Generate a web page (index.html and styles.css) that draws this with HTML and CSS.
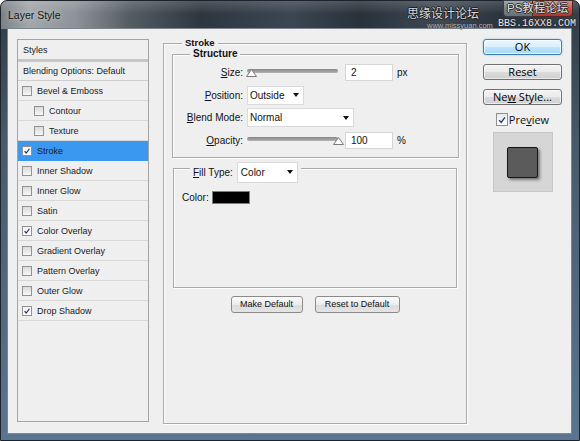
FILE: index.html
```html
<!DOCTYPE html>
<html>
<head>
<meta charset="utf-8">
<title>Layer Style</title>
<link rel="stylesheet" href="styles.css">
</head>
<body>
<div class="window">
  <div class="titlebar">
    <span class="title">Layer Style</span>
    <span class="cap-max"></span>
    <span class="cap-close"></span>
    <span class="wm-site">思缘设计论坛</span>
    <span class="wm-url">www.missyuan.com</span>
    <span class="wm-ps">PS教程论坛</span>
    <span class="wm-bbs">BBS.16XX8.COM</span>
  </div>
  <div class="client">
    <div class="styles-panel">
      <div class="sp-head">Styles</div>
      <div class="sp-blend">Blending Options: Default</div>
      <div class="sp-row"><span class="cb"></span>Bevel &amp; Emboss</div>
      <div class="sp-row sub"><span class="cb"></span>Contour</div>
      <div class="sp-row sub"><span class="cb"></span>Texture</div>
      <div class="sp-row active"><span class="cb on"><svg viewBox="0 0 10 10"><path d="M2 5.2 L4 7.6 L8 2.2" fill="none" stroke="#1f2f66" stroke-width="1.5"/></svg></span>Stroke</div>
      <div class="sp-row"><span class="cb"></span>Inner Shadow</div>
      <div class="sp-row"><span class="cb"></span>Inner Glow</div>
      <div class="sp-row"><span class="cb"></span>Satin</div>
      <div class="sp-row"><span class="cb on"><svg viewBox="0 0 10 10"><path d="M2 5.2 L4 7.6 L8 2.2" fill="none" stroke="#1f2f66" stroke-width="1.5"/></svg></span>Color Overlay</div>
      <div class="sp-row"><span class="cb"></span>Gradient Overlay</div>
      <div class="sp-row"><span class="cb"></span>Pattern Overlay</div>
      <div class="sp-row"><span class="cb"></span>Outer Glow</div>
      <div class="sp-row"><span class="cb on"><svg viewBox="0 0 10 10"><path d="M2 5.2 L4 7.6 L8 2.2" fill="none" stroke="#1f2f66" stroke-width="1.5"/></svg></span>Drop Shadow</div>
    </div>

    <div class="group stroke-group">
      <div class="group-title">Stroke</div>
      <div class="group structure">
        <div class="group-title small">Structure</div>
        <div class="form">
          <div class="row">
            <span class="lbl"><u>S</u>ize:</span>
            <div class="slider"><div class="track"></div><svg class="thumb" viewBox="0 0 11 8"><path d="M5.5 0.5 L10.5 7.5 L0.5 7.5 Z" fill="#fdfdfd" stroke="#7a7a7a"/></svg></div>
            <span class="num">2</span>
            <span class="unit">px</span>
          </div>
          <div class="row">
            <span class="lbl"><u>P</u>osition:</span>
            <div class="select pos">Outside</div>
          </div>
          <div class="row">
            <span class="lbl"><u>B</u>lend Mode:</span>
            <div class="select blend">Normal</div>
          </div>
          <div class="row">
            <span class="lbl"><u>O</u>pacity:</span>
            <div class="slider"><div class="track"></div><svg class="thumb end" viewBox="0 0 11 8"><path d="M5.5 0.5 L10.5 7.5 L0.5 7.5 Z" fill="#fdfdfd" stroke="#7a7a7a"/></svg></div>
            <span class="num">100</span>
            <span class="unit">%</span>
          </div>
        </div>
      </div>

      <div class="group fill">
        <div class="fill-head">
          <span><u>F</u>ill Type:</span>
          <div class="select filltype">Color</div>
        </div>
        <div class="color-row">
          <span>Color:</span>
          <span class="swatch"></span>
        </div>
      </div>

      <div class="btn-row">
        <button class="pbtn make">Make Default</button>
        <button class="pbtn reset">Reset to Default</button>
      </div>
    </div>

    <div class="side">
      <button class="abtn ok">OK</button>
      <button class="abtn">Reset</button>
      <button class="abtn">Ne<u>w</u> Style...</button>
      <div class="preview-check">
        <span class="pcb"><svg viewBox="0 0 12 12"><path d="M2.5 6.2 L5 9 L9.5 2.8" fill="none" stroke="#23357a" stroke-width="1.6"/></svg></span>
        <span>Pre<u>v</u>iew</span>
      </div>
      <div class="preview-box"><div class="pv-square"></div></div>
    </div>
  </div>
</div>
</body>
</html>
```

FILE: styles.css
```css
* { box-sizing: border-box; }
html, body { margin: 0; padding: 0; }
body {
  width: 580px;
  height: 441px;
  overflow: hidden;
  background: #ffffff;
  font-family: "Liberation Sans", Arial, sans-serif;
  color: #111;
}

.window {
  width: 580px;
  height: 441px;
  border: 1px solid #1c232a;
  border-radius: 7px 7px 0 0;
  padding: 0 7px 6px 6px;
  display: flex;
  flex-direction: column;
  background:
    linear-gradient(to bottom, rgba(255,255,255,0.16), rgba(255,255,255,0) 13px) top / 100% 28px no-repeat,
    linear-gradient(to right, #7b8186 0, #a3a7ab 28px, #8d9297 75px, #535b63 130px, #2e3740 200px, #3b4652 290px, #29323b 360px, #3f4955 440px, #2b343d 500px, #363f49 580px) top / 100% 28px no-repeat,
    linear-gradient(to bottom, #2f3a44 0, #475a6b 140px, #5a7590 100%);
}

.titlebar {
  height: 27px;
  flex: none;
  position: relative;
  display: flex;
  align-items: center;
  padding-left: 1px;
}
.title {
  font-size: 10.5px;
  color: #151515;
  text-shadow: 0 0 5px rgba(255,255,255,0.7);
}
.cap-max {
  position: absolute;
  left: 496px;
  top: -1px;
  width: 29px;
  height: 17px;
  border: 1px solid #3a3f45;
  border-right: none;
  border-radius: 0 0 0 4px;
  background: linear-gradient(#a4a9ae, #7b8188 50%, #6a7077);
}
.cap-close {
  position: absolute;
  left: 525px;
  top: -1px;
  width: 41px;
  height: 17px;
  border: 1px solid #4a2a26;
  border-radius: 0 0 4px 0;
  background: linear-gradient(#dc9488, #c85a4b 50%, #a8392b);
}
.wm-site {
  position: absolute;
  left: 400px;
  top: 5px;
  font-family: "Noto Sans CJK SC", sans-serif;
  font-size: 12px;
  line-height: 14px;
  color: #d9d9d9;
  text-shadow: -1px 0 #1d1d1d, 1px 0 #1d1d1d, 0 -1px #1d1d1d, 0 1px #1d1d1d;
  white-space: nowrap;
}
.wm-url {
  position: absolute;
  left: 420px;
  top: 21px;
  font-size: 7.5px;
  line-height: 7px;
  color: #b9b9b9;
  text-shadow: 0 0 1px #1d1d1d;
  white-space: nowrap;
}
.wm-ps {
  position: absolute;
  left: 500px;
  top: 1px;
  font-family: "Liberation Sans", "Noto Sans CJK SC", sans-serif;
  font-size: 11.5px;
  line-height: 12px;
  color: #e2e2e2;
  text-shadow: -1px 0 #2a2a2a, 1px 0 #2a2a2a, 0 -1px #2a2a2a, 0 1px #2a2a2a;
  white-space: nowrap;
}
.wm-bbs {
  position: absolute;
  left: 491px;
  top: 18px;
  font-family: "Liberation Mono", monospace;
  font-size: 10px;
  line-height: 10px;
  color: #e6e6e6;
  text-shadow: -1px 0 #2a2a2a, 1px 0 #2a2a2a, 0 -1px #2a2a2a, 0 1px #2a2a2a;
  white-space: nowrap;
}

.client {
  flex: none;
  height: 406px;
  background: #efefef;
  border: 1px solid #7a8792;
  display: flex;
  align-items: flex-start;
  padding: 8px 0 0 9px;
}

/* Styles list */
.styles-panel {
  flex: none;
  width: 132px;
  height: 383px;
  margin-top: 2px;
  border: 1px solid #a4a4a4;
  background: #efefef;
  font-size: 9px;
  color: #1a1a1a;
}
.sp-head {
  height: 22px;
  padding-left: 5px;
  display: flex;
  align-items: center;
  border-bottom: 3px solid #c7c7c7;
}
.sp-blend {
  height: 19px;
  padding-left: 5px;
  display: flex;
  align-items: center;
  border-bottom: 1px solid #cdcdcd;
}
.sp-row {
  height: 20px;
  display: flex;
  align-items: center;
  gap: 5px;
  padding-left: 4px;
  border-bottom: 1px solid #d8d8d8;
}
.sp-row.sub { padding-left: 16px; }
.sp-row.active { background: #3b98f0; border-bottom-color: #3b98f0; }
.cb {
  flex: none;
  width: 10px;
  height: 10px;
  border: 1px solid #929292;
  background: linear-gradient(#dadada, #f7f7f7);
  display: inline-flex;
}
.cb.on { background: linear-gradient(#f2f2f2, #ffffff); }
.cb svg { width: 8px; height: 8px; }

/* Group boxes */
.group {
  border: 1px solid #ababab;
  box-shadow: inset 1px 1px 0 #ffffff, 1px 1px 0 #ffffff;
}
.group-title {
  width: fit-content;
  background: #efefef;
  padding: 0 3px;
  font-weight: bold;
  font-size: 9.5px;
  line-height: 12px;
  margin: -7px 0 0 18px;
}
.group-title.small {
  font-size: 10px;
  line-height: 10px;
  margin: -6px 0 0 17px;
}
.stroke-group {
  flex: none;
  width: 304px;
  height: 381px;
  margin: 6px 0 0 14px;
}
.structure {
  margin: 5px 7px 0 8px;
  padding-bottom: 7px;
}
.form {
  padding-top: 4px;
  display: flex;
  flex-direction: column;
  gap: 3.5px;
}
.row {
  display: flex;
  align-items: center;
  height: 19px;
  font-size: 10px;
}
.lbl {
  width: 70px;
  text-align: right;
  margin-right: 4px;
}
.slider {
  position: relative;
  width: 91px;
  height: 19px;
  margin-right: 7px;
}
.track {
  margin-top: 6px;
  height: 4px;
  border-radius: 2px;
  background: linear-gradient(#858585, #b4b4b4);
}
.thumb {
  position: absolute;
  top: 6px;
  left: -1px;
  width: 11px;
  height: 8px;
}
.thumb.end { left: auto; right: -6px; }
.num {
  width: 48px;
  height: 17px;
  background: #ffffff;
  border: 1px solid #d5d5d5;
  padding-left: 5px;
  display: flex;
  align-items: center;
  margin-right: 4px;
}
.select {
  height: 19px;
  background: #ffffff;
  border: 1px solid #dadada;
  display: flex;
  align-items: center;
  justify-content: space-between;
  padding: 0 4px 0 2px;
  font-size: 10px;
}
.select::after {
  content: "";
  border-top: 4px solid #111;
  border-left: 3.5px solid transparent;
  border-right: 3.5px solid transparent;
}
.pos { width: 57px; }
.blend { width: 107px; }

.fill {
  margin: 10px 9px 0 9px;
  height: 120px;
}
.fill-head {
  display: flex;
  align-items: center;
  gap: 4px;
  width: fit-content;
  height: 21px;
  margin: -7px 0 0 16px;
  padding: 0 3px;
  background: #efefef;
  font-size: 10px;
}
.filltype { width: 61px; height: 21px; padding-left: 3px; }
.color-row {
  display: flex;
  align-items: center;
  gap: 3px;
  margin: 8px 0 0 8px;
  font-size: 10px;
}
.swatch {
  width: 38px;
  height: 13px;
  background: #000;
  border: 1px solid #7e7e7e;
}
.btn-row {
  display: flex;
  justify-content: center;
  gap: 12px;
  margin-top: 8px;
}
.pbtn {
  height: 17px;
  padding: 0;
  border: 1px solid #8a8a8a;
  border-radius: 3px;
  background: linear-gradient(#fbfbfb, #ececec 50%, #dcdcdc 51%, #e4e4e4);
  font-family: "Liberation Sans", Arial, sans-serif;
  font-size: 9px;
  color: #111;
}
.make { width: 72px; }
.reset { width: 85px; }

/* Right column */
.side {
  flex: none;
  width: 79px;
  margin: 2px 0 0 16px;
  display: flex;
  flex-direction: column;
  align-items: center;
  gap: 9px;
}
.abtn {
  width: 79px;
  height: 16px;
  padding: 0;
  border: 1px solid #707070;
  border-radius: 3px;
  background: linear-gradient(#f3f3f3 0, #ebebeb 50%, #dcdcdc 51%, #cfcfcf 100%);
  box-shadow: inset 0 0 0 1px rgba(255,255,255,0.6);
  font-family: "Open Sans", "Liberation Sans", sans-serif;
  font-size: 11px;
  line-height: 14px;
  color: #000;
}
.abtn.ok {
  border-color: #3c7fb1;
  background: linear-gradient(#eaf6fd 0, #d9f0fc 50%, #bee6fd 51%, #a7d9f5 100%);
  box-shadow: inset 0 0 0 1px rgba(255,255,255,0.7), 0 0 2px #7fc6ee;
}
.preview-check {
  display: flex;
  align-items: center;
  gap: 1px;
  margin-top: -1px;
  height: 13px;
  font-family: "Open Sans", "Liberation Sans", sans-serif;
  font-size: 11px;
}
.pcb {
  width: 12px;
  height: 13px;
  border: 1px solid #8e8f8f;
  background: linear-gradient(#e9e9e9, #ffffff);
  display: inline-flex;
  align-items: center;
  justify-content: center;
}
.pcb svg { width: 10px; height: 10px; }
.preview-box {
  width: 60px;
  height: 60px;
  margin-top: -3px;
  background: #d6d6d6;
  border: 1px solid #c6c6c6;
  display: flex;
  align-items: center;
  justify-content: center;
}
.pv-square {
  width: 31px;
  height: 31px;
  background: #5b5b5b;
  border: 1px solid #151515;
  border-radius: 2px;
  box-shadow: 2px 2px 3px rgba(0,0,0,0.45);
}
```
